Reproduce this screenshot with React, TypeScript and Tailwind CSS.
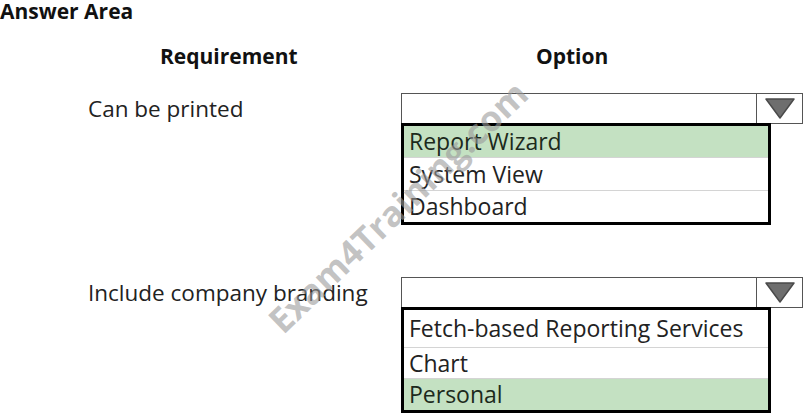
import type { ReactNode } from "react";

const font = { fontFamily: '"Open Sans", "Liberation Sans", sans-serif' };

type Row = { label: string; h: string; picked?: boolean };

function Arrow() {
  return (
    <svg width="30" height="21" viewBox="0 0 30 21">
      <polygon points="1,1 29,1 15,20" fill="#6e6e6e" stroke="#4a4a4a" strokeWidth="1.5" strokeLinejoin="round" />
    </svg>
  );
}

function Dropdown({ rows, listH }: { rows: Row[]; listH: string }) {
  return (
    <div className="flex flex-col w-[402px]">
      {/* closed select */}
      <div className="flex h-[31px] border border-[#555] bg-white">
        <div className="flex-1" />
        <div className="w-[46px] border-l border-[#555] flex items-center justify-center">
          <Arrow />
        </div>
      </div>

      {/* open list */}
      <div className={`w-[370px] ${listH} -mt-px border-[3px] border-black bg-white flex flex-col`}>
        {rows.map((r, i) => (
          <div
            key={r.label}
            className={`${r.h} flex items-center pl-[5px] text-[23px] ${
              i > 0 ? "border-t border-[#d4d4d4]" : ""
            } ${r.picked ? "bg-[#c4e1c2] text-[#1c2a1c]" : "text-[#222]"}`}
          >
            {r.label}
          </div>
        ))}
      </div>
    </div>
  );
}

function Question({ label, children }: { label: string; children: ReactNode }) {
  return (
    <div className="flex">
      <div className="w-[401px] pl-[88px] h-[31px] flex items-center text-[22.5px] text-[#222]">
        {label}
      </div>
      {children}
    </div>
  );
}

export default function App() {
  return (
    <main className="relative w-[804px] h-[415px] bg-white overflow-hidden" style={font}>
      <h1 className="text-[21px] leading-[22px] font-bold text-[#111]">Answer Area</h1>

      {/* column headings */}
      <div className="flex mt-[22px] h-[26px] items-center text-[21px] font-bold text-[#111]">
        <span className="pl-[160px] w-[536px]">Requirement</span>
        <span>Option</span>
      </div>

      <div className="mt-[23px]">
        <Question label="Can be printed">
          <Dropdown
            listH="h-[102px]"
            rows={[
              { label: "Report Wizard", h: "h-[31px]", picked: true },
              { label: "System View", h: "h-[33px]" },
              { label: "Dashboard", h: "h-[32px]" },
            ]}
          />
        </Question>
      </div>

      <div className="mt-[52px]">
        <Question label="Include company branding">
          <Dropdown
            listH="h-[106px]"
            rows={[
              { label: "Fetch-based Reporting Services", h: "h-[37px]" },
              { label: "Chart", h: "h-[31px]" },
              { label: "Personal", h: "h-[32px]", picked: true },
            ]}
          />
        </Question>
      </div>

      {/* watermark */}
      <div className="absolute left-[398px] top-[207px] -translate-x-1/2 -translate-y-1/2 -rotate-[44deg] whitespace-nowrap text-[35px] font-bold text-[#9a9a9a]/60 pointer-events-none">
        Exam4Training.com
      </div>
    </main>
  );
}
